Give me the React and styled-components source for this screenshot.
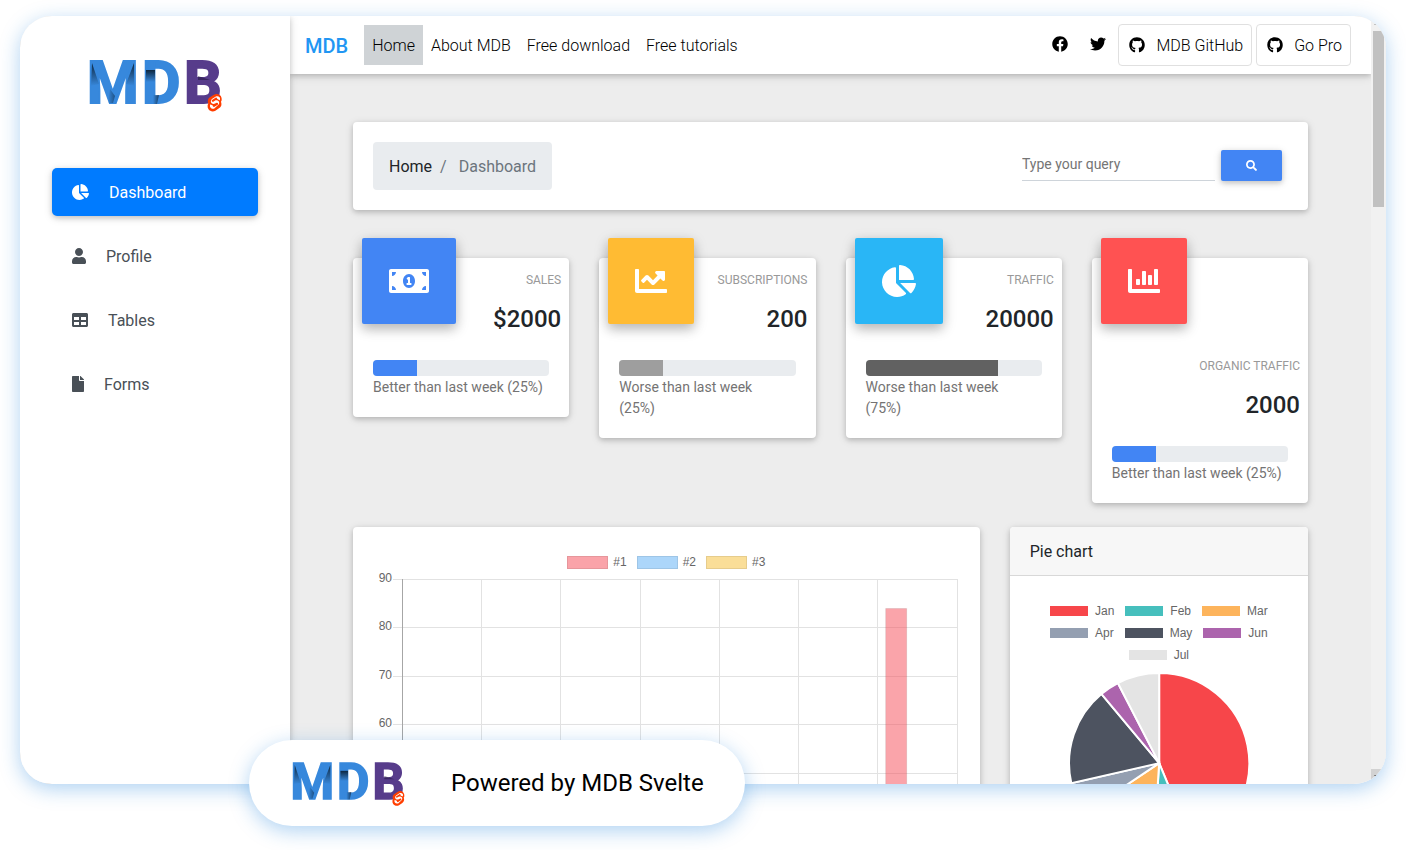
import React, { useId } from "react";
import styled, { createGlobalStyle } from "styled-components";
import {
  FaChartPie, FaUser, FaTable, FaFile, FaFacebook, FaTwitter, FaGithub,
  FaSearch, FaMoneyBillAlt, FaChartLine, FaChartBar,
} from "react-icons/fa";

const GlobalStyle = createGlobalStyle`
  *, *::before, *::after { box-sizing: border-box; }
  body { margin: 0; background: #fff; color: #212529; font: 400 16px/24px Roboto, "Liberation Sans", sans-serif; overflow: hidden; }
  svg { display: block; flex: none; }
  a { color: inherit; text-decoration: none; }
  h1, h2, p, ul, ol, dl, dd { margin: 0; padding: 0; list-style: none; }
`;

const cardShadow = "0 2px 5px 0 rgba(0,0,0,.16), 0 2px 10px 0 rgba(0,0,0,.12)";
const glow = "0 5px 20px 0 rgba(26,127,219,.35)";

const Page = styled.div`
  height: 100vh;
  display: flex;
  flex-direction: column;
  padding: 16px 20px 24px;
`;
const Frame = styled.div`
  flex: 1;
  min-height: 0;
  display: flex;
  overflow: hidden;
  border-radius: 32px;
  background: #ededed;
`;
const FrameGlow = styled.div`
  flex: 1;
  min-height: 0;
  display: flex;
  border-radius: 32px;
  box-shadow: ${glow};
`;

const Sidebar = styled.aside`
  position: relative;
  z-index: 2;
  flex: 0 0 270px;
  background: #fff;
  box-shadow: ${cardShadow};
`;
const SidebarLogo = styled.a`
  display: flex;
  justify-content: center;
  padding: 40px 0 54px;
`;
const NavList = styled.ul`
  display: flex;
  flex-direction: column;
  gap: 16px;
  padding: 0 32px;
`;
const NavItem = styled.a`
  display: flex;
  align-items: center;
  gap: 20px;
  height: 48px;
  padding: 0 20px;
  border-radius: 5px;
  color: ${(p) => (p.$active ? "#fff" : "#495057")};
  background: ${(p) => (p.$active ? "#007bff" : "transparent")};
  box-shadow: ${(p) => (p.$active ? cardShadow : "none")};
`;
const LinkLabel = styled.span`
  padding-top: 2px;
`;

const Main = styled.main`
  flex: 1;
  min-width: 0;
  overflow: hidden;
`;
const Navbar = styled.nav`
  position: relative;
  z-index: 1;
  display: flex;
  align-items: center;
  height: 58px;
  padding: 0 20px 0 15px;
  background: #fff;
  box-shadow: ${cardShadow};
`;
const Brand = styled.a`
  margin-right: 16px;
  padding-top: 2px;
  font-size: 20px;
  font-weight: 500;
  color: #2196f3;
`;
const NavLinks = styled.ul`
  display: flex;
`;
const NavLink = styled.a`
  display: block;
  padding: 9px 8px 7px;
  font-weight: 300;
  color: #000;
  background: ${(p) => (p.$active ? "#cfd3d6" : "transparent")};
`;
const NavActions = styled.div`
  display: flex;
  align-items: center;
  gap: 4px;
  margin-left: auto;
  color: #000;
`;
const IconLink = styled.a`
  padding: 0 8px 2px 10px;
`;
const OutlineLink = styled.a`
  display: flex;
  align-items: center;
  gap: 11px;
  height: 42px;
  padding: 0 8px 0 10px;
  border: 1px solid #e0e0e0;
  border-radius: 4px;
  font-weight: 300;
`;

const Content = styled.div`
  padding: 48px 63px;
`;
const Card = styled.section`
  background: #fff;
  border-radius: 4px;
  box-shadow: ${cardShadow};
`;
const TitleCard = styled(Card)`
  display: flex;
  align-items: center;
  justify-content: space-between;
  padding: 20px 26px 20px 20px;
`;
const Breadcrumb = styled.ol`
  display: flex;
  gap: 8px;
  padding: 13px 16px 11px;
  border-radius: 4px;
  background: #e9ecef;
`;
const Crumb = styled.li`
  color: #6c757d;
  &[aria-current]::before { content: "/"; padding-right: 12px; }
  a { color: #212529; }
`;
const SearchForm = styled.form`
  display: flex;
  align-items: center;
  gap: 6px;
  padding-bottom: 2px;
`;
const SearchInput = styled.input`
  width: 193px;
  height: 32px;
  padding: 0 0 2px;
  border: 0;
  border-bottom: 1px solid #ced4da;
  outline: 0;
  font: 400 14px/20px Roboto, "Liberation Sans", sans-serif;
  &::placeholder { color: #757575; opacity: 1; }
`;
const SearchButton = styled.button`
  display: flex;
  align-items: center;
  justify-content: center;
  width: 61px;
  height: 31px;
  border: 0;
  border-radius: 2px;
  background: #4285f4;
  color: #fff;
  box-shadow: ${cardShadow};
`;

const StatGrid = styled.div`
  display: grid;
  grid-template-columns: repeat(4, minmax(0, 1fr));
  align-items: start;
  gap: 30px;
  margin: 48px 0 24px;
`;
const StatHeader = styled.div`
  display: flex;
  flex-wrap: wrap;
  gap: 4px 16px;
  padding: 0 8px 0 9px;
`;
const StatIcon = styled.div`
  height: 86px;
  margin: -20px 0 16px;
  padding: 27px;
  border-radius: 2px;
  background: ${(p) => p.$color};
  color: #fff;
  box-shadow: 0 5px 11px 0 rgba(0,0,0,.18), 0 4px 15px 0 rgba(0,0,0,.15);
`;
const StatData = styled.dl`
  flex: 1 0 auto;
  height: 82px;
  padding-top: 13px;
  text-align: right;
`;
const StatLabel = styled.dt`
  font-size: 12px;
  line-height: 18px;
  color: #999;
  text-transform: uppercase;
`;
const StatValue = styled.dd`
  margin-top: 16px;
  font-size: 24px;
  line-height: 28px;
  font-weight: 500;
`;
const StatBody = styled.div`
  padding: 20px 20px 19px;
`;
const Progress = styled.div`
  height: 16px;
  border-radius: 4px;
  background: #e9ecef;
  overflow: hidden;
`;
const ProgressFill = styled.div`
  height: 100%;
  background: ${(p) => p.$color};
`;
const StatNote = styled.p`
  padding-top: 1px;
  font-size: 14px;
  line-height: 21px;
  color: #747373;
  white-space: pre-line;
`;

const ChartGrid = styled.div`
  display: grid;
  grid-template-columns: repeat(12, minmax(0, 1fr));
  align-items: start;
  gap: 30px;
`;
const ChartCard = styled(Card)`
  grid-column: span ${(p) => p.$span};
  overflow: hidden;
`;
const CardHeader = styled.h2`
  padding: 13px 20px 11px;
  border-bottom: 1px solid #d8d8d8;
  background: #f7f7f7;
  font-size: 16px;
  font-weight: 400;
`;
const BarBody = styled.div`
  padding: 28px 20px 20px;
`;
const PieBody = styled.div`
  padding: 24px 20px 20px;
`;
const Legend = styled.ul`
  display: flex;
  flex-wrap: wrap;
  justify-content: center;
  gap: 0 ${(p) => p.$gap}px;
  font: 12px/${(p) => p.$line}px "Liberation Sans", Arial, sans-serif;
  color: #666;
`;
const LegendItem = styled.li`
  display: flex;
  align-items: center;
  gap: ${(p) => p.$gap}px;
`;
const Swatch = styled.span`
  width: ${(p) => p.$w}px;
  height: ${(p) => p.$h}px;
  background: ${(p) => p.$color};
  border: ${(p) => (p.$outlined ? "1px solid rgba(0,0,0,.08)" : "0")};
`;
const ChartSvg = styled.svg`
  width: 100%;
  height: auto;
  overflow: visible;
  font: 12px "Liberation Sans", Arial, sans-serif;
`;

const Scrollbar = styled.div`
  flex: 0 0 15px;
  display: flex;
  flex-direction: column;
  background: #f1f1f1;
`;
const ScrollArrow = styled.span`
  display: flex;
  align-items: center;
  justify-content: center;
  height: 15px;
  padding-right: 4px;
  background: ${(p) => (p.$end ? "#d2d2d2" : "transparent")};
`;
const ScrollTrack = styled.div`
  flex: 1;
  padding: 0 2px;
`;
const ScrollThumb = styled.div`
  height: 23.8%;
  background: #c1c1c1;
`;

const Powered = styled.footer`
  position: relative;
  z-index: 3;
  align-self: flex-start;
  display: flex;
  align-items: center;
  gap: 46px;
  height: 86px;
  margin: -44px 0 0 229px;
  padding: 0 41px 0 42px;
  border-radius: 43px;
  background: #fff;
  box-shadow: ${glow};
  font-size: 24px;
  color: #000;
`;

const LogoSvg = styled.svg`
  overflow: visible;
  font: 700 60px Roboto, "Liberation Sans", sans-serif;
`;

/* Folded-ribbon wordmark with the Svelte badge in the corner. */
function Logo({ width, height }) {
  const id = useId();
  return (
    <LogoSvg width={width} height={height} viewBox="0 0 134 58" role="img" aria-label="MDB Svelte">
      <defs>
        <linearGradient id={id + "a"} x1="0" y1="0" x2="0" y2="1">
          <stop offset="0" stopColor="#0b2238" stopOpacity=".95" />
          <stop offset="1" stopColor="#0b2238" stopOpacity="0" />
        </linearGradient>
        <linearGradient id={id + "b"} x1="0" y1="0" x2="1" y2="0">
          <stop offset="0" stopColor="#0b2238" stopOpacity="0" />
          <stop offset="1" stopColor="#0b2238" stopOpacity=".9" />
        </linearGradient>
      </defs>
      <g strokeWidth="2" fontSize="59">
        <text x="-1" y="47" fill="#3788dc" stroke="#3788dc">M</text>
        <text x="54" y="47" fill="#3788dc" stroke="#3788dc">D</text>
        <text x="96" y="47" fill="#573c8b" stroke="#573c8b">B</text>
      </g>
      <path d="M4 7 L11 28 L3 30Z M46 7 L46 30 L38 28Z" fill={`url(#${id}a)`} />
      <path d="M22 33 L27 40 L25 47 L20 47Z" fill={`url(#${id}b)`} opacity=".6" />
      <path d="M58 14 H67 V26 H58Z" fill={`url(#${id}a)`} />
      <path d="M65 39 H71 L69 48 H65Z" fill={`url(#${id}b)`} opacity=".8" />
      <path d="M110 20 L122 24 L110 24Z" fill="#1d1238" opacity=".5" />
      <g transform="translate(119 38) scale(.15)">
        <path d="M92 14C82 -1 61 -5 46 5L20 22C12 27 7 34 6 43c-2 7-1 14 3 21-3 4-4 8-5 12-1 9 1 18 6 26 10 15 31 19 46 9l26-17c7-5 12-12 14-21 1-7 0-14-3-21 2-4 4-8 5-12 1-9-1-18-6-26" fill="#ff3e00" />
        <path d="M45 98c-8 2-17-1-22-8-3-4-4-9-3-15l2-4 1-2 2 1c4 3 8 5 13 7h1v2c0 2 0 4 1 5 2 2 4 3 7 3l25-16 2-5-1-5c-2-3-5-4-8-3l-11 6c-8 5-18 3-25-4-6-7-4-19 4-26l26-17c8-5 19-3 25 4 3 4 4 9 3 15l-2 4-1 2-2-1c-4-3-8-5-13-7h-1v-2l-1-5c-2-3-5-4-8-3L34 40c-2 2-2 4-2 6 2 5 6 7 10 5l10-6c9-5 19-4 26 4 6 8 4 19-4 25L49 97l-4 1" fill="#fff" />
      </g>
    </LogoSvg>
  );
}

const navItems = [
  { label: "Dashboard", Icon: FaChartPie, width: 17, active: true },
  { label: "Profile", Icon: FaUser, width: 14 },
  { label: "Tables", Icon: FaTable, width: 16 },
  { label: "Forms", Icon: FaFile, width: 12 },
];

const stats = [
  { label: "Sales", value: "$2000", Icon: FaMoneyBillAlt, width: 40, color: "#4285f4", bar: "#4285f4", pct: 25, note: "Better than last week (25%)" },
  { label: "Subscriptions", value: "200", Icon: FaChartLine, width: 32, color: "#ffbb33", bar: "#9e9e9e", pct: 25, note: "Worse than last week\n(25%)" },
  { label: "Traffic", value: "20000", Icon: FaChartPie, width: 34, color: "#29b6f6", bar: "#616161", pct: 75, note: "Worse than last week\n(75%)" },
  { label: "Organic traffic", value: "2000", Icon: FaChartBar, width: 32, color: "#ff5252", bar: "#4285f4", pct: 25, note: "Better than last week (25%)" },
];

const series = [
  { label: "#1", color: "#faa3a9" },
  { label: "#2", color: "#acd6fa" },
  { label: "#3", color: "#fade98" },
];

const months = [
  { label: "Jan", value: 300, color: "#f7464a" },
  { label: "Feb", value: 50, color: "#46bfbd" },
  { label: "Mar", value: 100, color: "#fdb45c" },
  { label: "Apr", value: 40, color: "#949fb1" },
  { label: "May", value: 120, color: "#4d5360" },
  { label: "Jun", value: 24, color: "#ac64ad" },
  { label: "Jul", value: 52, color: "#e4e4e4" },
];

function BarChart() {
  const ticks = [90, 80, 70, 60];
  const columns = [0, 1, 2, 3, 4, 5, 6, 7];
  const rows = [0, 1, 2, 3, 4];
  return (
    <ChartSvg viewBox="0 0 587 290" role="img" aria-label="Bar chart">
      <g stroke="#e2e2e2" shapeRendering="crispEdges">
        {rows.map((r) => {
          const y = Math.floor(r * 48.5) + 9.5;
          return <line key={r} x1="20" x2="585" y1={y} y2={y} />;
        })}
        {columns.map((c) => {
          const x = Math.round(c * 79.22) + 29.5;
          return <line key={c} x1={x} x2={x} y1="9" y2="290" stroke={c ? "#e2e2e2" : "#a6a6a6"} />;
        })}
      </g>
      <rect x="513" y="38.5" width="21" height="252" fill="rgba(245,74,85,.5)" stroke="rgba(0,0,0,.08)" />
      {ticks.map((t, i) => (
        <text key={t} x="19" y={Math.floor(i * 48.5) + 12} textAnchor="end" fill="#666">{t}</text>
      ))}
    </ChartSvg>
  );
}

function PieChart() {
  const total = months.reduce((sum, m) => sum + m.value, 0);
  const cx = 129, cy = 97, r = 90;
  let start = 0;
  const point = (a) => `${cx + r * Math.sin(a)} ${cy - r * Math.cos(a)}`;
  return (
    <ChartSvg viewBox="0 0 258 190" role="img" aria-label="Pie chart">
      {months.map((m) => {
        const end = start + (m.value / total) * Math.PI * 2;
        const d = `M${cx} ${cy} L${point(start)} A${r} ${r} 0 0 1 ${point(end)} Z`;
        start = end;
        return <path key={m.label} d={d} fill={m.color} stroke="#fff" strokeWidth="2" />;
      })}
    </ChartSvg>
  );
}

function StatCard({ label, value, Icon, width, color, bar, pct, note }) {
  return (
    <Card>
      <StatHeader>
        <StatIcon $color={color}><Icon style={{ width, height: 32 }} aria-hidden="true" /></StatIcon>
        <StatData>
          <StatLabel>{label}</StatLabel>
          <StatValue>{value}</StatValue>
        </StatData>
      </StatHeader>
      <StatBody>
        <Progress role="progressbar" aria-label={label} aria-valuenow={pct} aria-valuemin={0} aria-valuemax={100}>
          <ProgressFill $color={bar} style={{ width: `${pct}%` }} />
        </Progress>
        <StatNote>{note}</StatNote>
      </StatBody>
    </Card>
  );
}

export default function App() {
  return (
    <>
      <GlobalStyle />
      <Page>
        <FrameGlow>
          <Frame>
            <Sidebar>
              <SidebarLogo href="#"><Logo width={134} height={58} /></SidebarLogo>
              <NavList>
                {navItems.map(({ label, Icon, width, active }) => (
                  <li key={label}>
                    <NavItem href="#" $active={active}>
                      <Icon style={{ width, height: 16 }} aria-hidden="true" />
                      <LinkLabel>{label}</LinkLabel>
                    </NavItem>
                  </li>
                ))}
              </NavList>
            </Sidebar>
            <Main>
              <Navbar>
                <Brand href="#">MDB</Brand>
                <NavLinks>
                  <li><NavLink href="#" $active>Home</NavLink></li>
                  <li><NavLink href="#">About MDB</NavLink></li>
                  <li><NavLink href="#">Free download</NavLink></li>
                  <li><NavLink href="#">Free tutorials</NavLink></li>
                </NavLinks>
                <NavActions>
                  <IconLink href="#" aria-label="Facebook"><FaFacebook size={16} /></IconLink>
                  <IconLink href="#" aria-label="Twitter"><FaTwitter size={16} /></IconLink>
                  <OutlineLink href="#"><FaGithub size={16} /><LinkLabel>MDB GitHub</LinkLabel></OutlineLink>
                  <OutlineLink href="#"><FaGithub size={16} /><LinkLabel>Go Pro</LinkLabel></OutlineLink>
                </NavActions>
              </Navbar>
              <Content>
                <TitleCard>
                  <Breadcrumb>
                    <Crumb><a href="#">Home</a></Crumb>
                    <Crumb aria-current="page">Dashboard</Crumb>
                  </Breadcrumb>
                  <SearchForm onSubmit={(e) => e.preventDefault()}>
                    <SearchInput type="search" placeholder="Type your query" aria-label="Type your query" />
                    <SearchButton type="submit" aria-label="Search"><FaSearch size={11} /></SearchButton>
                  </SearchForm>
                </TitleCard>
                <StatGrid>
                  {stats.map((s) => <StatCard key={s.label} {...s} />)}
                </StatGrid>
                <ChartGrid>
                  <ChartCard $span={8}>
                    <BarBody>
                      <Legend $gap={10} $line={15}>
                        {series.map((s) => (
                          <LegendItem key={s.label} $gap={5}>
                            <Swatch $w={41} $h={13} $color={s.color} $outlined />
                            {s.label}
                          </LegendItem>
                        ))}
                      </Legend>
                      <BarChart />
                    </BarBody>
                  </ChartCard>
                  <ChartCard $span={4}>
                    <CardHeader>Pie chart</CardHeader>
                    <PieBody>
                      <Legend $gap={11} $line={22}>
                        {months.map((m) => (
                          <LegendItem key={m.label} $gap={7}>
                            <Swatch $w={38} $h={10} $color={m.color} />
                            {m.label}
                          </LegendItem>
                        ))}
                      </Legend>
                      <PieChart />
                    </PieBody>
                  </ChartCard>
                </ChartGrid>
              </Content>
            </Main>
            <Scrollbar aria-hidden="true">
              <ScrollArrow><svg width="5" height="3" viewBox="0 0 5 3"><path d="M0 3 L2.500 0 L5 3Z" fill="#a3a3a3" /></svg></ScrollArrow>
              <ScrollTrack><ScrollThumb /></ScrollTrack>
              <ScrollArrow $end><svg width="5" height="3" viewBox="0 0 5 3"><path d="M0 0 L2.500 3 L5 0Z" fill="#505050" /></svg></ScrollArrow>
            </Scrollbar>
          </Frame>
        </FrameGlow>
        <Powered>
          <Logo width={114} height={49} />
          Powered by MDB Svelte
        </Powered>
      </Page>
    </>
  );
}
